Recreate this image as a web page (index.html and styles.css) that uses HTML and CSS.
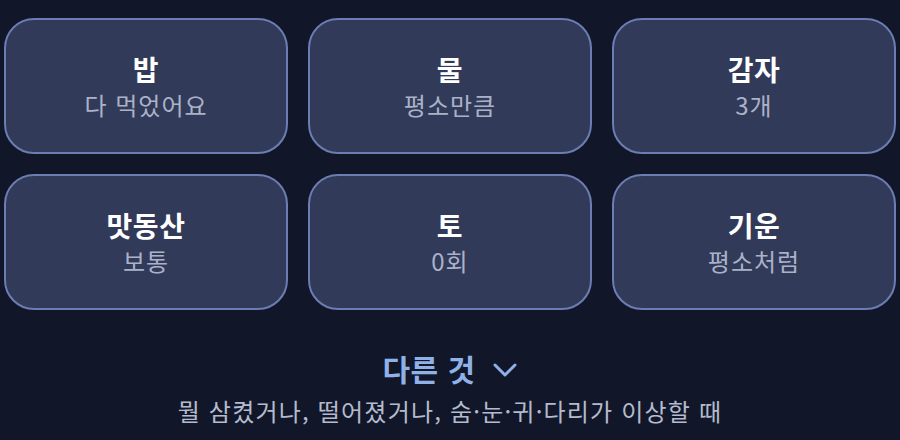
FILE: index.html
```html
<!DOCTYPE html>
<html lang="ko">
<head>
<meta charset="utf-8">
<link rel="stylesheet" href="styles.css">
</head>
<body>
<div class="page">
  <div class="grid">
    <div class="card"><div class="title">밥</div><div class="sub">다 먹었어요</div></div>
    <div class="card"><div class="title">물</div><div class="sub">평소만큼</div></div>
    <div class="card"><div class="title">감자</div><div class="sub">3개</div></div>
    <div class="card"><div class="title">맛동산</div><div class="sub">보통</div></div>
    <div class="card"><div class="title">토</div><div class="sub">0회</div></div>
    <div class="card"><div class="title">기운</div><div class="sub">평소처럼</div></div>
  </div>
  <div class="more">
    <div class="more-btn"><span>다른 것</span>
      <svg class="chev" width="26" height="16" viewBox="0 0 26 16"><path d="M3 3l10 10 10-10" fill="none" stroke="currentColor" stroke-width="3" stroke-linecap="round" stroke-linejoin="round"/></svg>
    </div>
    <div class="hint">뭘 삼켰거나, 떨어졌거나, 숨·눈·귀·다리가 이상할 때</div>
  </div>
</div>
</body>
</html>
```
FILE: styles.css
```css
* { box-sizing: border-box; }
html, body { margin: 0; padding: 0; background: #111729; }
body {
  width: 900px; height: 440px; overflow: hidden;
  font-family: "Noto Sans CJK KR", "Noto Sans", sans-serif;
}
.page { padding: 18px 4px 0; }
.grid {
  display: grid;
  grid-template-columns: repeat(3, 1fr);
  column-gap: 20px;
  row-gap: 20px;
}
.card {
  height: 136px;
  background: #323a5a;
  border: 2px solid #6b7db3;
  border-radius: 30px;
  display: flex; flex-direction: column; align-items: center; justify-content: center;
}
.title { color: #ffffff; font-weight: 700; font-size: 28px; line-height: 36px; letter-spacing: 0.5px; }
.sub { color: #aab2c8; font-size: 24px; line-height: 32px; margin-top: 2px; letter-spacing: 1px; }
.more { display: flex; flex-direction: column; align-items: center; margin-top: 39px; }
.more-btn {
  color: #8fb1e8; font-weight: 700; font-size: 30px; line-height: 38px;
  display: flex; align-items: center; gap: 16px; letter-spacing: 0.5px;
}
.chev { margin-top: 4px; }
.hint { color: #b4bbce; font-size: 24px; line-height: 32px; margin-top: 8px; letter-spacing: 1.2px; }
```
